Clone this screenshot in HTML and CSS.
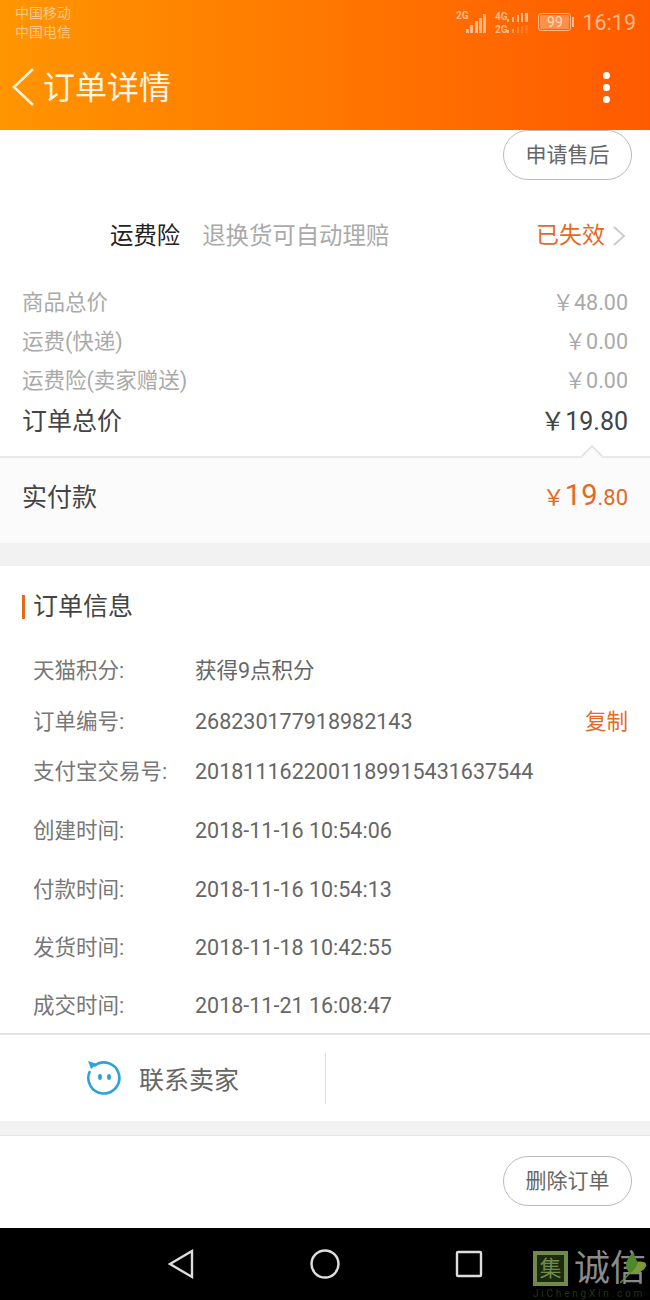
FILE: index.html
```html
<!DOCTYPE html>
<html lang="zh-CN">
  <head>
    <meta charset="UTF-8" />
    <title>订单详情</title>
    <link rel="stylesheet" href="styles.css">
  </head>
  <body>
    <!-- header -->
    <div class="header">
      <div class="status">
        <div class="carriers">
          <div>中国移动</div>
          <div>中国电信</div>
        </div>
        <div class="status-right">
          <svg class="signal" width="76" height="26" viewBox="0 0 76 26">
            <g fill="#ffb98a">
              <text x="0" y="11" class="net">2G</text>
              <rect x="10" y="21" width="3" height="4"/>
              <rect x="14" y="17" width="3" height="8"/>
              <rect x="19" y="13" width="3" height="12"/>
              <rect x="23" y="10" width="3" height="15"/>
              <rect x="27" y="6" width="3" height="19"/>
              <text x="39" y="12" class="net">4G</text>
              <text x="39" y="25" class="net">2G</text>
              <rect x="51" y="11" width="2" height="3"/>
              <rect x="56" y="9" width="2" height="5"/>
              <rect x="61" y="7" width="2" height="7"/>
              <rect x="65" y="5" width="2" height="9"/>
              <rect x="69" y="5" width="3" height="9"/>
              <rect x="51" y="22" width="2" height="3"/>
              <rect x="56" y="21" width="2" height="4" opacity="0.7"/>
              <rect x="61" y="19" width="2" height="6" opacity="0.4"/>
              <rect x="65" y="18" width="2" height="7" opacity="0.3"/>
              <rect x="69" y="17" width="3" height="8" opacity="0.2"/>
            </g>
          </svg>
          <div class="battery"><span class="battery-body">99</span><i class="battery-cap"></i></div>
          <span class="clock">16:19</span>
        </div>
      </div>
      <div class="nav">
        <svg class="back" width="24" height="40" viewBox="0 0 24 40">
          <path d="M22 2 L3 20 L22 38" fill="none" stroke="#fff0dc" stroke-width="2.6"/>
        </svg>
        <h1>订单详情</h1>
        <div class="more"><i></i><i></i><i></i></div>
      </div>
    </div>

    <div class="main">
      <div class="action action-top">
        <a class="btn">申请售后</a>
      </div>

      <div class="insure">
        <span class="insure-name">运费险</span>
        <span class="insure-desc">退换货可自动理赔</span>
        <span class="insure-state">已失效</span>
        <svg class="arrow" width="14" height="22" viewBox="0 0 14 22">
          <path d="M2 2 L12 11 L2 20" fill="none" stroke="#ccc" stroke-width="2"/>
        </svg>
      </div>

      <ul class="prices">
        <li><span>商品总价</span><span>￥48.00</span></li>
        <li><span>运费(快递)</span><span>￥0.00</span></li>
        <li><span>运费险(卖家赠送)</span><span>￥0.00</span></li>
        <li class="total"><span>订单总价</span><span>￥19.80</span></li>
      </ul>

      <div class="paid">
        <i class="notch"></i>
        <span class="paid-label">实付款</span>
        <span class="paid-num"><small>￥</small><b>19</b><small>.80</small></span>
      </div>

      <div class="gap"></div>

      <div class="info">
        <h2>订单信息</h2>
        <ul class="info-list">
          <li class="short"><label>天猫积分:</label><span>获得9点积分</span></li>
          <li class="short"><label>订单编号:</label><span>268230177918982143</span><a>复制</a></li>
          <li class="short last-short"><label>支付宝交易号:</label><span>2018111622001189915431637544</span></li>
          <li><label>创建时间:</label><span>2018-11-16 10:54:06</span></li>
          <li><label>付款时间:</label><span>2018-11-16 10:54:13</span></li>
          <li><label>发货时间:</label><span>2018-11-18 10:42:55</span></li>
          <li><label>成交时间:</label><span>2018-11-21 16:08:47</span></li>
        </ul>
      </div>

      <div class="contact">
        <div class="contact-cell">
          <svg width="36" height="36" viewBox="0 0 36 36">
            <path d="M8 6 A15.5 15.5 0 1 1 4 11" fill="none" stroke="#2ba4dc" stroke-width="2.6"/>
            <path d="M2 1 L11 4 L5 9 Z" fill="#2ba4dc"/>
            <ellipse cx="14" cy="17" rx="2" ry="3" fill="#2ba4dc"/>
            <ellipse cx="23" cy="17" rx="2" ry="3" fill="#2ba4dc"/>
          </svg>
          <span>联系卖家</span>
        </div>
        <div class="contact-cell empty"></div>
      </div>

      <div class="gap gap-small"></div>

      <div class="action action-bottom">
        <a class="btn">删除订单</a>
      </div>
    </div>

    <!-- android nav -->
    <div class="sysbar">
      <svg width="28" height="32" viewBox="0 0 28 32">
        <path d="M25 3 L3 16 L25 29 Z" fill="none" stroke="#ddd" stroke-width="2.4"/>
      </svg>
      <svg width="32" height="32" viewBox="0 0 32 32">
        <circle cx="16" cy="16" r="13.5" fill="none" stroke="#ddd" stroke-width="2.4"/>
      </svg>
      <svg width="28" height="28" viewBox="0 0 28 28">
        <rect x="2" y="2" width="24" height="24" rx="1" fill="none" stroke="#ddd" stroke-width="2.4"/>
      </svg>
      <div class="mark">
        <span class="mark-box">集</span>
        <span class="mark-name">诚信</span>
        <svg class="mark-leaf" width="27" height="30" viewBox="0 0 27 30">
          <path d="M0 30 L10 20" fill="none" stroke="#5d8f3a" stroke-width="1.5"/>
          <path d="M10 20 C4 16 5 6 13 0 C16 4 16 8 18 9 C24 8 27 10 26 13 C24 18 16 22 10 20 Z" fill="#4e8a2c"/>
          <path d="M18 9 C24 8 27 10 26 13 C24 18 16 22 10 20 C14 18 17 14 18 9 Z" fill="#7f9a35"/>
        </svg>
        <span class="mark-url">JiChengXin.com</span>
      </div>
    </div>
  </body>
</html>
```

FILE: styles.css
```css
* {
  margin: 0;
  padding: 0;
  box-sizing: border-box;
}
ul {
  list-style: none;
}
body {
  width: 650px;
  height: 1300px;
  overflow: hidden;
  background-color: #fff;
  font-family: Roboto, "Noto Sans CJK SC", sans-serif;
  color: #666;
}

/* header */
.header {
  height: 130px;
  background: linear-gradient(90deg, #ff9500, #ff5a00);
}
.status {
  display: flex;
  justify-content: space-between;
  height: 46px;
  padding: 4px 14px 0 15px;
}
.carriers {
  font-size: 14px;
  line-height: 19px;
  color: #ffc78c;
}
.status-right {
  display: flex;
  align-items: flex-start;
}
.net {
  font-size: 10px;
  font-weight: 700;
}
.signal {
  margin-top: 4px;
}
.battery {
  display: flex;
  align-items: center;
  margin: 9px 8px 0 6px;
}
.battery-body {
  width: 33px;
  height: 18px;
  border: 1px solid #ffb98a;
  border-radius: 3px;
  background-color: rgba(255, 200, 160, 0.45);
  background-clip: content-box;
  padding: 1px;
  font-size: 14px;
  line-height: 14px;
  text-align: center;
  color: #ffd9bd;
}
.battery-cap {
  width: 2px;
  height: 10px;
  margin-left: 1px;
  background-color: #ffb98a;
}
.clock {
  font-size: 21.5px;
  line-height: 26px;
  margin-top: 6px;
  color: #ffb98a;
}
.nav {
  display: flex;
  align-items: center;
  height: 84px;
  padding: 0 40px 2px 11px;
}
.back {
  margin-right: 8px;
}
.nav h1 {
  flex: 1;
  padding-top: 2px;
  font-size: 32px;
  font-weight: 400;
  line-height: 40px;
  color: #fff5e6;
}
.more i {
  display: block;
  width: 7px;
  height: 7px;
  margin: 5px 0;
  border-radius: 50%;
  background-color: #fff;
}

/* buttons */
.action {
  display: flex;
  justify-content: flex-end;
  padding-right: 18px;
}
.action-top {
  height: 49px;
}
.action-bottom {
  height: 92px;
  padding-top: 20px;
}
.btn {
  width: 129px;
  height: 50px;
  border: 1px solid #bbb;
  border-radius: 25px;
  font-size: 21px;
  line-height: 48px;
  text-align: center;
  color: #666;
}

/* insurance */
.insure {
  display: flex;
  align-items: center;
  height: 64px;
  margin-top: 25px;
  padding: 0 24px 0 110px;
  font-size: 23.4px;
  line-height: 30px;
}
.insure-name {
  color: #222;
}
.insure-desc {
  flex: 1;
  margin-left: 22px;
  color: #aaa;
}
.insure-state {
  margin-right: 7px;
  font-size: 23px;
  color: #e5691f;
}

/* prices */
.prices {
  padding: 15px 22px 0;
  font-size: 21.5px;
  line-height: 30px;
  color: #aaa;
}
.prices li {
  display: flex;
  justify-content: space-between;
  align-items: center;
  height: 39px;
}
.prices .total {
  height: 43px;
  font-size: 25px;
  color: #444;
}

/* paid */
.paid {
  position: relative;
  display: flex;
  justify-content: space-between;
  align-items: center;
  height: 87px;
  margin-top: 13px;
  padding: 0 22px 6px;
  border-top: 2px solid #e9e9e9;
  background-color: #fbfbfb;
}
.notch {
  position: absolute;
  top: -10px;
  right: 50px;
  width: 16px;
  height: 16px;
  border-top: 2px solid #e4e4e4;
  border-left: 2px solid #e4e4e4;
  background-color: #fbfbfb;
  transform: rotate(45deg);
}
.paid-label {
  font-size: 25px;
  line-height: 34px;
  color: #444;
}
.paid-num {
  line-height: 34px;
  color: #e5691f;
}
.paid-num small {
  font-size: 22px;
}
.paid-num b {
  font-size: 29px;
  font-weight: 400;
}

.gap {
  height: 23px;
  background-color: #f2f2f2;
}
.gap-small {
  height: 15px;
  border-bottom: 1px solid #e4e4e4;
}

/* order info */
.info {
  height: 469px;
  border-bottom: 2px solid #e4e4e4;
}
.info h2 {
  display: flex;
  align-items: center;
  height: 80px;
  margin-left: 22px;
  padding-top: 2px;
  font-size: 25px;
  font-weight: 400;
  line-height: 34px;
  color: #444;
}
.info h2::before {
  content: '';
  width: 3px;
  height: 24px;
  margin-right: 8px;
  background-color: #e5691f;
}
.info-list {
  padding: 0 22px 0 33px;
  font-size: 21.5px;
  line-height: 30px;
}
.info-list li {
  display: flex;
  align-items: center;
  height: 58.4px;
}
.info-list .short {
  height: 50.5px;
}
.info-list .last-short {
  margin-bottom: 4.5px;
}
.info-list label {
  width: 162px;
  color: #777;
}
.info-list span {
  flex: 1;
  color: #666;
}
.info-list a {
  color: #e5691f;
}

/* contact */
.contact {
  display: flex;
  align-items: center;
  height: 86px;
}
.contact-cell {
  display: flex;
  align-items: center;
  justify-content: center;
  gap: 17px;
  width: 326px;
  height: 51px;
  border-right: 1px solid #ddd;
  font-size: 25px;
  color: #666;
}
.contact-cell.empty {
  flex: 1;
  border-right: 0;
}

/* system bar */
.sysbar {
  position: relative;
  display: flex;
  align-items: center;
  gap: 114px;
  height: 72px;
  padding-left: 167px;
  background-color: #000;
}
.mark {
  position: absolute;
  top: 23px;
  left: 533px;
  width: 117px;
  height: 49px;
}
.mark-box {
  position: absolute;
  top: 0;
  left: 0;
  width: 35px;
  height: 35px;
  border: 4px solid #6f8a4a;
  font-size: 22px;
  line-height: 27px;
  text-align: center;
  color: #6f8a4a;
  background-color: #1c2a10;
}
.mark-name {
  position: absolute;
  top: 0;
  left: 41px;
  font-size: 36px;
  line-height: 36px;
  color: #8a8a8a;
  white-space: nowrap;
}
.mark-leaf {
  position: absolute;
  top: 2px;
  left: 87px;
}
.mark-url {
  position: absolute;
  top: 37px;
  left: 0;
  font-size: 10px;
  line-height: 12px;
  letter-spacing: 2.8px;
  color: #1d3a12;
  white-space: nowrap;
}
```
